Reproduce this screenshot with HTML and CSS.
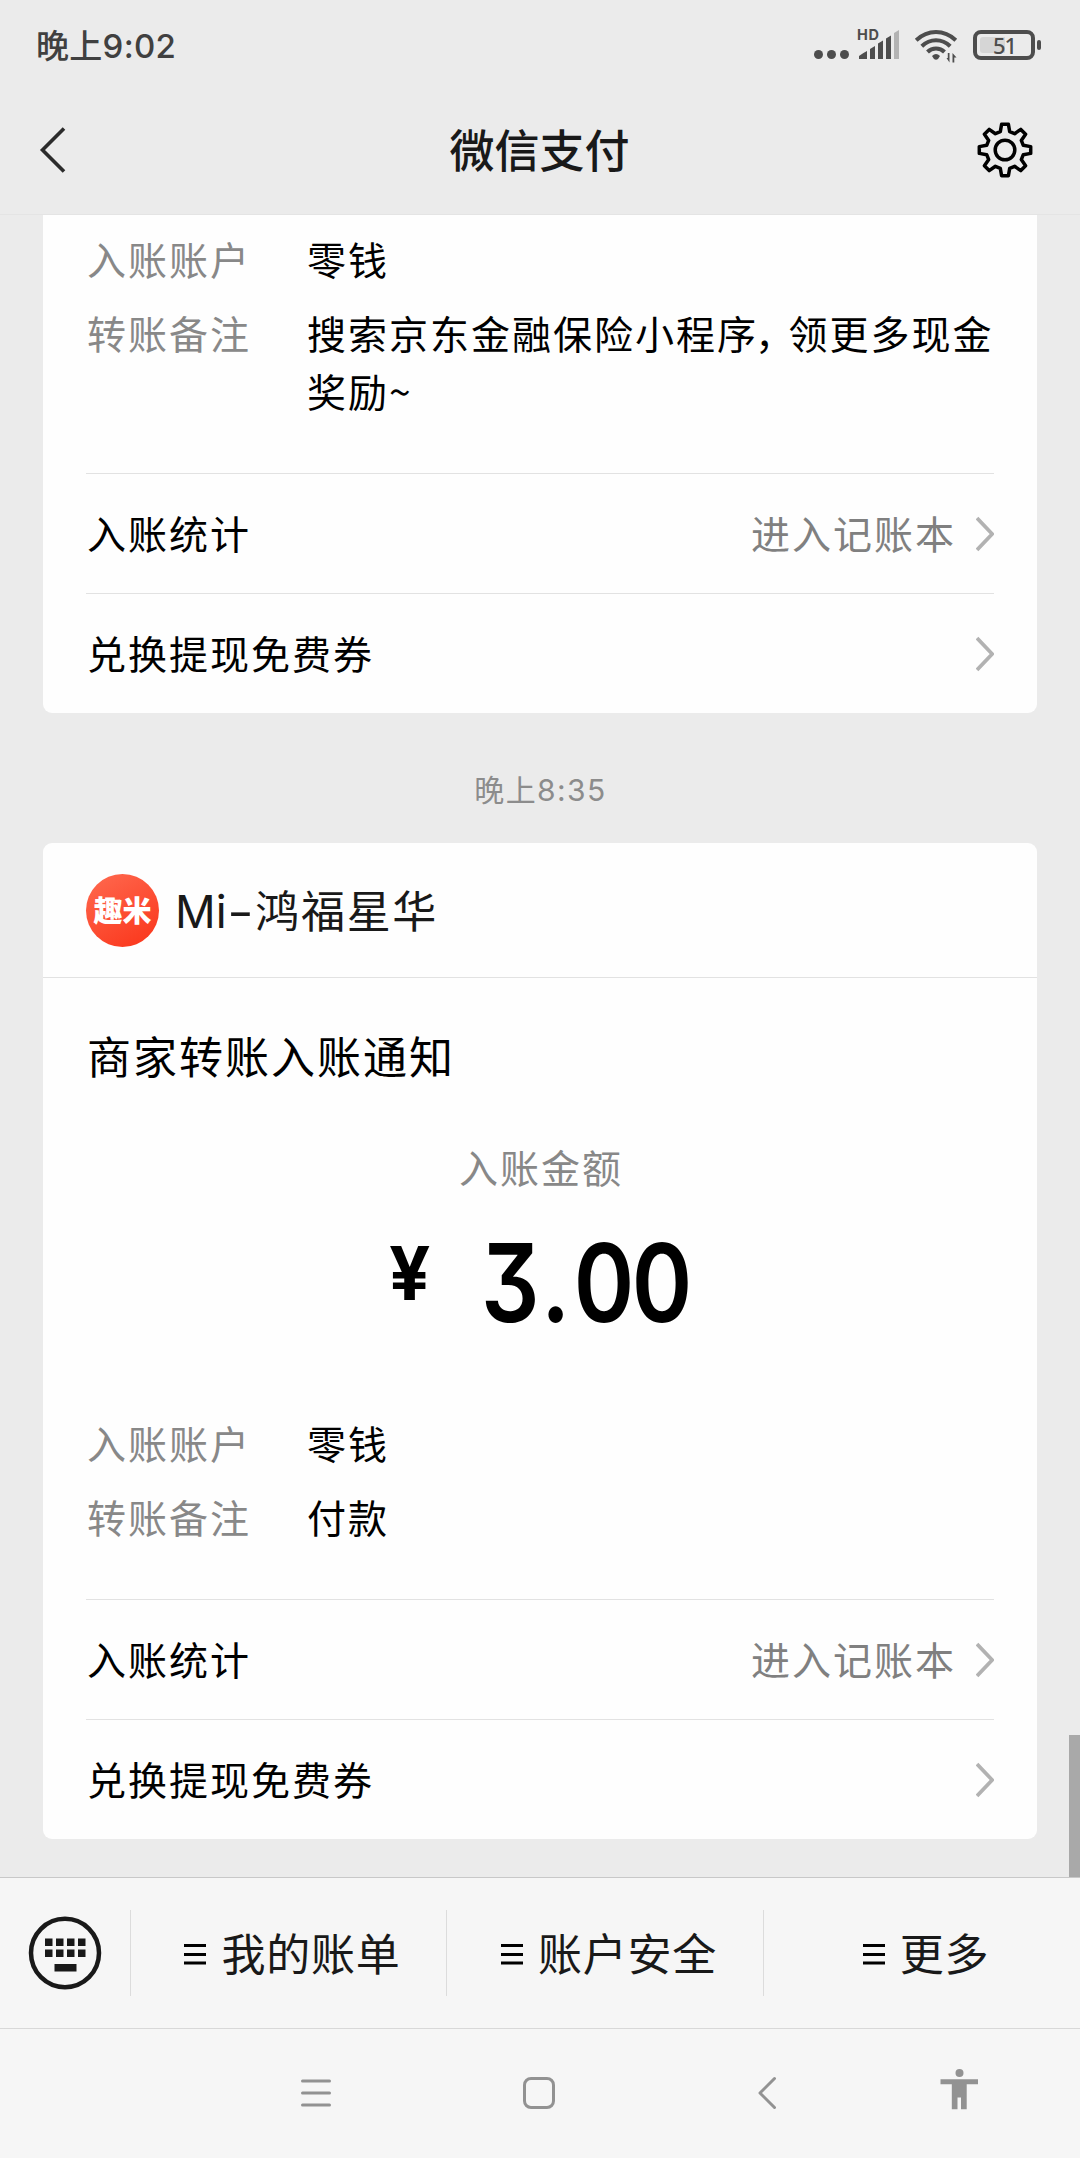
FILE: index.html
```html
<!DOCTYPE html>
<html lang="zh-CN">
<head>
<meta charset="utf-8">
<title>微信支付</title>
<link rel="stylesheet" href="styles.css">
</head>
<body>
<div class="screen">
  <div class="status">
    <span class="clock">晚上9:02</span>
    <svg class="status-icons" width="228" height="40" viewBox="814 25 228 40" fill="#4d4d4d">
      <circle cx="818.5" cy="54.5" r="4.5"/><circle cx="831.5" cy="54.5" r="4.5"/><circle cx="844.5" cy="54.5" r="4.5"/>
      <text class="hd" x="857" y="40">HD</text>
      <path d="M859 59v-3q4-3 8-5v8zM870 59V49l5-3v13zM878 59V43.500l5-3V59zM886 59V38.500l5-3V59z"/>
      <path d="M894 59V33l5-3v29z" fill="#b3b3b3"/>
      <g fill="none" stroke="#4d4d4d" stroke-width="4">
        <path d="M916.200 40.200Q925 32 936 32T955.800 40.200"/>
        <path d="M921.800 46.200Q928 40.200 936 40.200T950.200 46.200"/>
        <path d="M927.500 52Q931 48.500 936 48.500T944.500 52"/>
      </g>
      <path d="M932 56q4-4 8 0l-2 3q-2 1.500-4 0z"/>
      <path d="M949.500 53v9.500l-3-4.500h1.300v-5zM952.500 62.500V53l4 4.500h-2.200v5z"/>
      <rect x="975" y="32" width="58" height="26" rx="6" fill="none" stroke="#4d4d4d" stroke-width="4"/>
      <path d="M980 40q0-3 3-3h22v16h-22q-3 0-3-3z" fill="#d6d6d6"/>
      <rect x="1037" y="40" width="4" height="10" rx="2"/>
      <text class="charge" x="993" y="54">51</text>
    </svg>
  </div>

  <div class="titlebar">
    <svg class="back" width="30" height="50" viewBox="0 0 30 50"><path d="M25 3.500 3.500 25 25 46.500" fill="none" stroke="#2b2b2b" stroke-width="3.600"/></svg>
    <h1>微信支付</h1>
    <svg width="58" height="58" viewBox="-29 -29 58 58" fill="none" stroke="#000" stroke-width="3.500" stroke-linejoin="round">
      <path d="M-4.700-18.300L-3.400-25.700H3.400L4.700-18.300L9.600-16.300L15.800-20.600L20.600-15.800L16.300-9.600L18.300-4.700L25.700-3.400V3.400L18.300 4.700L16.300 9.600L20.600 15.800L15.800 20.600L9.600 16.300L4.700 18.300L3.400 25.700H-3.400L-4.700 18.300L-9.600 16.300L-15.800 20.600L-20.600 15.800L-16.300 9.600L-18.300 4.700L-25.700 3.400V-3.400L-18.300-4.700L-16.300-9.600L-20.600-15.800L-15.800-20.600L-9.600-16.300Z"/>
      <circle r="9.800"/>
    </svg>
  </div>

  <div class="chat">
    <div class="card card-top">
      <dl class="details">
        <dt>入账账户</dt><dd>零钱</dd>
        <dt>转账备注</dt><dd>搜索京东金融保险小程序<span class="comma">，</span><span>领更多现金</span><span>奖励~</span></dd>
      </dl>
      <div class="link"><span class="label">入账统计</span><span class="more">进入记账本</span><svg class="chev" width="18" height="36" viewBox="0 0 18 36"><path d="M1 2 16.200 18 1 34"/></svg></div>
      <div class="link"><span class="label">兑换提现免费券</span><svg class="chev" width="18" height="36" viewBox="0 0 18 36"><path d="M1 2 16.200 18 1 34"/></svg></div>
    </div>

    <div class="stamp">晚上8:35</div>

    <div class="card">
      <div class="merchant">
        <span class="avatar">趣米</span>
        <span class="name"><span class="latin">Mi<span class="dash">-</span></span>鸿福星华</span>
      </div>
      <h2>商家转账入账通知</h2>
      <div class="amount-label">入账金额</div>
      <div class="amount"><span class="yen">¥</span><span class="number"><span class="wide">3.</span><span class="tight">0</span>0</span></div>
      <dl class="details">
        <dt>入账账户</dt><dd>零钱</dd>
        <dt>转账备注</dt><dd>付款</dd>
      </dl>
      <div class="link"><span class="label">入账统计</span><span class="more">进入记账本</span><svg class="chev" width="18" height="36" viewBox="0 0 18 36"><path d="M1 2 16.200 18 1 34"/></svg></div>
      <div class="link"><span class="label">兑换提现免费券</span><svg class="chev" width="18" height="36" viewBox="0 0 18 36"><path d="M1 2 16.200 18 1 34"/></svg></div>
    </div>
    <i class="scrollbar"></i>
  </div>

  <div class="menu">
    <div class="keyboard">
      <svg width="74" height="74" viewBox="0 0 74 74" fill="#191919">
        <ellipse cx="37" cy="37" rx="34" ry="34.200" fill="none" stroke="#191919" stroke-width="4.500"/>
        <path d="M17 22.500h7.500v7.500H17zM28 22.500h7.500v7.500H28zM39 22.500h7.500v7.500H39zM50 22.500h7.500v7.500H50zM17 33.500h7.500V41H17zM28 33.500h7.500V41H28zM39 33.500h7.500V41H39zM50 33.500h7.500V41H50zM26.500 48H48.500v7.500H26.500z"/>
      </svg>
    </div>
    <div class="tab"><svg width="22" height="21" viewBox="0 0 22 21"><path d="M0 0h22v3H0zM0 9h22v3H0zM0 17.500h22v3H0z"/></svg><span>我的账单</span></div>
    <div class="tab"><svg width="22" height="21" viewBox="0 0 22 21"><path d="M0 0h22v3H0zM0 9h22v3H0zM0 17.500h22v3H0z"/></svg><span>账户安全</span></div>
    <div class="tab"><svg width="22" height="21" viewBox="0 0 22 21"><path d="M0 0h22v3H0zM0 9h22v3H0zM0 17.500h22v3H0z"/></svg><span>更多</span></div>
  </div>

  <div class="nav">
    <svg width="32" height="34" viewBox="0 0 32 34"><path d="M2.500 5h27M2.500 17h27M2.500 29h27"/></svg>
    <svg width="34" height="34" viewBox="0 0 34 34"><rect x="2.500" y="2.500" width="29" height="29" rx="6.500"/></svg>
    <svg width="20" height="34" viewBox="0 0 20 34"><path d="M17.500 2.500 3 17 17.500 31.500"/></svg>
    <svg class="person" width="38" height="42" viewBox="0 0 38 42"><circle cx="19.500" cy="5" r="4"/><path d="M.5 11.300h37.500v5H26.700v25H21V29.500h-3.500v11.800h-5.700v-25H.5z"/></svg>
  </div>
</div>
</body>
</html>
```
FILE: styles.css
```css
* { box-sizing: border-box; margin: 0; padding: 0; }
body { background: #ebebeb; }
svg { display: block; flex: none; }

.screen {
  width: 1080px;
  height: 2158px;
  display: flex;
  flex-direction: column;
  font-family: "Noto Sans CJK SC", sans-serif;
  color: #000;
  background: #ebebeb;
}

/* Status bar */
.status {
  height: 85px;
  padding: 0 38px 0 36px;
  display: flex;
  justify-content: space-between;
  align-items: flex-start;
}
.clock {
  margin-top: 24px;
  font: 500 33px/44px Inter, "Noto Sans CJK SC", sans-serif;
  letter-spacing: .300px;
  color: #404040;
}
.status-icons { margin-top: 25px; }
.hd { font: 700 14.500px Inter, sans-serif; letter-spacing: .6px; }
.charge { font: 500 22px "Noto Sans", sans-serif; letter-spacing: -1px; }

/* Title bar */
.titlebar {
  height: 130px;
  padding: 0 46px 0 39px;
  display: grid;
  grid-template-columns: 1fr auto 1fr;
  align-items: center;
  border-bottom: 1px solid #e4e4e4;
}
.titlebar h1 { margin: -2px -3px 0 3px; font-size: 45px; line-height: 60px; font-weight: 500; color: #191919; }
.titlebar svg:last-child { justify-self: end; }

/* Conversation */
.chat {
  position: relative;
  height: 1662px;
  padding: 0 43px;
  overflow: hidden;
}
.card { background: #fefefe; border-radius: 9px; padding: 0 43px; }
.card-top { border-radius: 0 0 9px 9px; padding-top: 14px; height: 498px; }

.details {
  display: grid;
  grid-template-columns: 220px 1fr;
  row-gap: 16px;
  align-content: start;
  height: 186px;
  padding-left: 1px;
  font-size: 39px;
  line-height: 58px;
  letter-spacing: 2px;
}
.details dt { color: #888; }
.details dd { margin-right: -8px; }
.comma { margin: 0 12px 0 -3px; font-feature-settings: "halt"; }

.link {
  display: flex;
  align-items: center;
  height: 120px;
  padding-left: 1px;
  border-top: 1px solid #e2e2e2;
  font-size: 39px;
  letter-spacing: 2px;
}
.card-top .details { height: 244px; }
.label, .more { padding-bottom: 4px; }
.more { margin-left: auto; color: #808080; }
.chev { margin-left: auto; fill: none; stroke: #b2b2b2; stroke-width: 3.700; }
.more + .chev { margin-left: 20px; }

.stamp {
  height: 130px;
  padding: 1px 0 0 1px;
  text-align: center;
  font: 400 30px/152px Inter, "Noto Sans CJK SC", sans-serif;
  letter-spacing: 1.400px;
  color: #8c8c8c;
}

.merchant {
  display: flex;
  align-items: center;
  gap: 16px;
  height: 135px;
  margin: 0 -43px;
  padding: 0 43px;
  border-bottom: 1px solid #e2e2e2;
}
.avatar {
  width: 73px;
  height: 73px;
  border-radius: 50%;
  background: linear-gradient(150deg, #ff6a50, #fa3419);
  color: #fff;
  font-size: 29px;
  font-weight: 900;
  line-height: 71px;
  text-align: center;
}
.name { font-size: 44px; line-height: 66px; letter-spacing: 1.700px; color: #191919; }
.latin { font-family: Inter, sans-serif; font-size: 45px; letter-spacing: 0; }
.dash { display: inline-block; margin-right: 8px; transform: scaleX(1.300); transform-origin: left; }

.card h2 {
  height: 137px;
  padding-left: 1px;
  font-size: 44px;
  line-height: 154px;
  font-weight: 400;
  letter-spacing: 2px;
}
.amount-label {
  padding: 22px 0 0 2px;
  text-align: center;
  font-size: 39px;
  line-height: 58px;
  letter-spacing: 2px;
  color: #888;
}
.amount {
  display: flex;
  height: 218px;
  padding-left: 303px;
  font-family: Inter, sans-serif;
}
.yen { width: 92px; font-size: 74px; line-height: 156px; font-weight: 700; transform: scaleX(.980); transform-origin: left; }
.number {
  font-size: 108px;
  line-height: 176px;
  font-weight: 600;
  font-feature-settings: "cv09";
  transform: scaleX(.850);
  transform-origin: left;
}
.wide { letter-spacing: 4px; }
.tight { letter-spacing: -3px; }

.scrollbar {
  position: absolute;
  right: 0;
  bottom: 0;
  width: 11px;
  height: 142px;
  background: #a9a9a9;
}

/* Service menu */
.menu {
  display: grid;
  grid-template-columns: 131px 316px 317px 316px;
  align-items: center;
  height: 151px;
  border-top: 1px solid #c8c8c8;
  background: #f6f6f6;
}
.keyboard, .tab { height: 86px; display: flex; align-items: center; justify-content: center; }
.keyboard { border-right: 1px solid #dcdcdc; }
.tab { gap: 15px; border-right: 1px solid #dcdcdc; font-size: 44px; line-height: 64px; letter-spacing: .8px; color: #191919; padding-left: 8px; }
.tab:last-child { border-right: 0; padding-left: 8px; }
.tab svg { fill: #000; margin-top: 2px; }
.tab span { padding-bottom: 3px; }

/* System navigation */
.nav {
  display: grid;
  grid-template-columns: 204px 242px 214px 170px;
  justify-items: center;
  height: 130px;
  padding: 47px 0 0 214px;
  border-top: 1px solid #d8d8d8;
  background: #f6f6f6;
}
.nav svg { fill: none; stroke: #929292; stroke-width: 3; stroke-linecap: round; stroke-linejoin: round; }
.nav .person { fill: #929292; stroke: none; margin-top: -8px; }
```
